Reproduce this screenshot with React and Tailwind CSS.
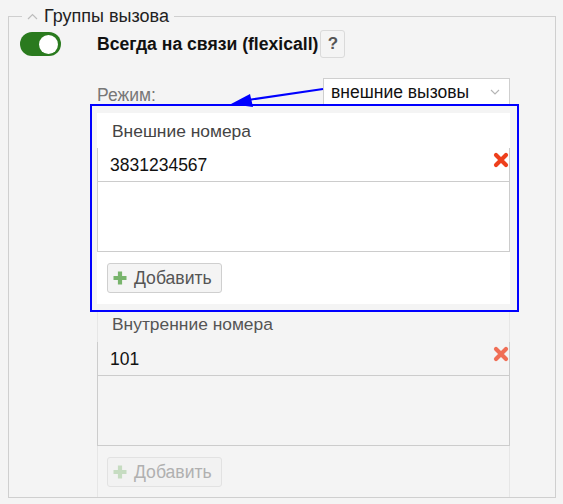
import React from "react";

const font = { fontFamily: "'Liberation Sans', Arial, sans-serif" };

const RemoveIcon = ({ faded }) => (
  <svg
    width="16"
    height="16"
    viewBox="0 0 16 16"
    className={faded ? "opacity-85" : ""}
  >
    <path
      d="M3 3 L13 13 M13 3 L3 13"
      stroke={faded ? "#f0573a" : "#ee3f1c"}
      strokeWidth="4.2"
      strokeLinecap="round"
    />
  </svg>
);

const PlusIcon = ({ faded }) => (
  <svg width="14" height="14" viewBox="0 0 14 14">
    <path
      d="M7 0.5 V13.5 M0.5 7 H13.5"
      stroke={faded ? "#c6dcc1" : "#78b46c"}
      strokeWidth="4.2"
    />
  </svg>
);

const AddButton = ({ disabled }) => (
  <button
    className={`ml-[10px] flex h-[30px] w-[115px] items-center gap-[7px] rounded-[3px] border pl-[5px] text-[17.6px] ${
      disabled
        ? "border-[#e2e2e2] bg-[#f2f2f2] text-[#b0b0b0]"
        : "border-[#cfcfcf] bg-[#f4f4f4] text-[#555]"
    }`}
  >
    <PlusIcon faded={disabled} />
    <span>Добавить</span>
  </button>
);

const NumberList = ({ value, faded }) => (
  <div className="border-x border-b border-[#cccccc]">
    <div className="relative h-[34px] border-b border-[#cccccc] pl-[12px] pt-[7px] text-[17.5px] leading-[20px] text-[#111]">
      {value}
      <span className="absolute right-0 top-[4px]">
        <RemoveIcon faded={faded} />
      </span>
    </div>
    <div className="h-[69px]" />
  </div>
);

export default function App() {
  return (
    <div
      className="relative h-[504px] w-[563px] overflow-hidden bg-[#f4f4f4]"
      style={font}
    >
      <div className="relative ml-[8px] mt-[16px] h-[482px] w-[548px] border border-[#cfcfcf]">
        <div className="absolute left-[13px] top-[-11px] flex items-center gap-[6px] bg-[#f4f4f4] px-[5px] text-[18px] leading-[20px] text-[#222]">
          <svg width="11" height="7" viewBox="0 0 11 7">
            <path d="M1 6 L5.5 1.5 L10 6" fill="none" stroke="#bdbdbd" strokeWidth="1.2" />
          </svg>
          <span>Группы вызова</span>
        </div>

        <div className="flex items-center pl-[11px] pt-[13px]">
          <div className="flex h-[24px] w-[41px] items-center justify-end rounded-full bg-[#2a7a1e] pr-[3px]">
            <div className="h-[19px] w-[19px] rounded-full bg-white" />
          </div>
          <span className="ml-[36px] text-[17.6px] font-bold text-[#111]">
            Всегда на связи (flexicall)
          </span>
          <span className="ml-[2px] flex h-[28px] w-[25px] items-center justify-center rounded-[3px] border border-[#dadada] bg-[#f4f4f4] text-[17px] font-bold text-[#555]">
            ?
          </span>
        </div>

        <div className="ml-[88px] mt-[20px] flex w-[413px] items-start justify-between">
          <span className="pt-[7px] text-[17.5px] leading-[20px] text-[#777]">
            Режим:
          </span>
          <div className="flex h-[28px] w-[187px] items-center justify-between border border-[#cfcfcf] bg-white pl-[7px] pr-[9px] text-[17.5px] text-[#111]">
            <span>внешние вызовы</span>
            <svg width="10" height="6" viewBox="0 0 10 6">
              <path d="M1 1 L5 5 L9 1" fill="none" stroke="#b5b5b5" strokeWidth="1.1" />
            </svg>
          </div>
        </div>

        <div className="ml-[88px] w-[413px]">
          <div className="mt-[7px] bg-white pb-[11px]">
            <div className="h-[35px] pl-[15px] pt-[8px] text-[17.4px] leading-[20px] text-[#444]">
              Внешние номера
            </div>
            <NumberList value="3831234567" />
            <div className="mt-[11px]">
              <AddButton />
            </div>
          </div>
          <div className="mt-[7px] h-[186px] border-x border-[#e6e6e6]">
            <div className="h-[31px] pl-[14px] pt-[3px] text-[17.4px] leading-[20px] text-[#555]">
              Внутренние номера
            </div>
            <div className="-mx-px">
              <NumberList value="101" faded />
            </div>
            <div className="mt-[11px] -ml-px">
              <AddButton disabled />
            </div>
          </div>
        </div>
      </div>

      <div className="absolute left-[90px] top-[104px] h-[208px] w-[429px] border-2 border-[#0000ff]" />
      <svg
        className="absolute left-0 top-0"
        width="563"
        height="504"
        viewBox="0 0 563 504"
      >
        <line x1="323" y1="89" x2="248" y2="100" stroke="#0000ff" strokeWidth="2" />
        <polygon points="231,104 250,94 253,107" fill="#0000ff" />
      </svg>
    </div>
  );
}
